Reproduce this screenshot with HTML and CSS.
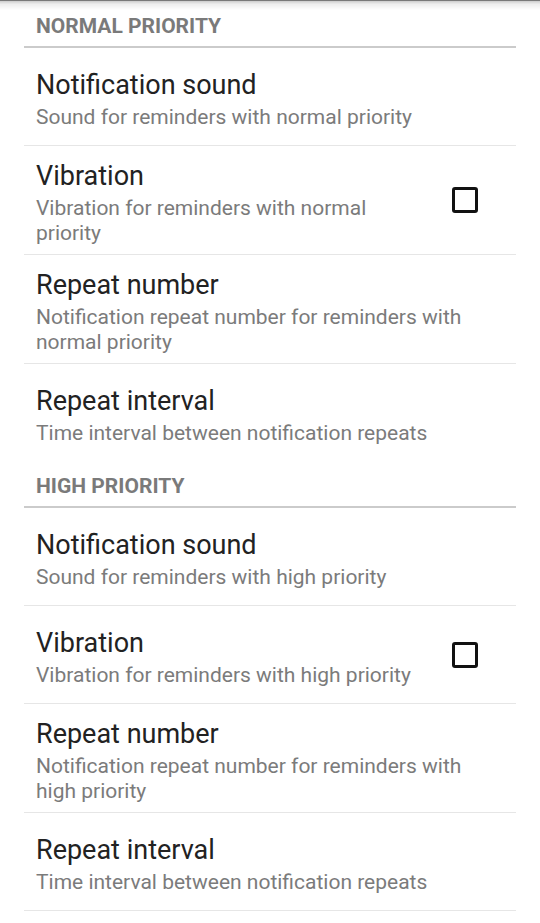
FILE: index.html
```html
<!DOCTYPE html>
<html lang="en">
<head>
<meta charset="utf-8">
<title>Notification settings</title>
<link rel="stylesheet" href="styles.css">
</head>
<body>
<div class="screen">
  <div class="bar-shadow"></div>
  <section class="category">
    <h2 class="cat-title">NORMAL PRIORITY</h2>
    <ul class="prefs">
      <li class="pref">
        <div class="text">
          <div class="title">Notification sound</div>
          <div class="summary">Sound for reminders with normal priority</div>
        </div>
      </li>
      <li class="pref">
        <div class="text">
          <div class="title">Vibration</div>
          <div class="summary">Vibration for reminders with normal priority</div>
        </div>
        <span class="checkbox"></span>
      </li>
      <li class="pref">
        <div class="text">
          <div class="title">Repeat number</div>
          <div class="summary">Notification repeat number for reminders with normal priority</div>
        </div>
      </li>
      <li class="pref">
        <div class="text">
          <div class="title">Repeat interval</div>
          <div class="summary">Time interval between notification repeats</div>
        </div>
      </li>
    </ul>
  </section>
  <section class="category">
    <h2 class="cat-title">HIGH PRIORITY</h2>
    <ul class="prefs">
      <li class="pref">
        <div class="text">
          <div class="title">Notification sound</div>
          <div class="summary">Sound for reminders with high priority</div>
        </div>
      </li>
      <li class="pref">
        <div class="text">
          <div class="title">Vibration</div>
          <div class="summary">Vibration for reminders with high priority</div>
        </div>
        <span class="checkbox"></span>
      </li>
      <li class="pref">
        <div class="text">
          <div class="title">Repeat number</div>
          <div class="summary">Notification repeat number for reminders with high priority</div>
        </div>
      </li>
      <li class="pref">
        <div class="text">
          <div class="title">Repeat interval</div>
          <div class="summary">Time interval between notification repeats</div>
        </div>
      </li>
    </ul>
  </section>
  <div class="list-end"></div>
</div>
</body>
</html>
```
FILE: styles.css
```css
html, body {
  margin: 0;
  padding: 0;
  background: #ffffff;
}

body {
  font-family: Roboto, "Noto Sans", "Liberation Sans", sans-serif;
  -webkit-font-smoothing: antialiased;
}

.screen {
  padding: 1px 24px 0;
}

.bar-shadow {
  position: fixed;
  top: 0;
  left: 0;
  right: 0;
  height: 10px;
  background: linear-gradient(to bottom,
    rgba(0, 0, 0, 0.85) 0,
    rgba(0, 0, 0, 0.2) 1px,
    rgba(0, 0, 0, 0.07) 4px,
    rgba(0, 0, 0, 0) 10px);
  pointer-events: none;
}

.cat-title {
  margin: 0;
  padding: 13px 12px 7px;
  font-size: 21px;
  line-height: 25px;
  font-weight: 700;
  color: #7a7a7a;
  border-bottom: 2px solid #cbcbcb;
}

.prefs {
  list-style: none;
  margin: 0;
  padding: 0;
}

.pref {
  display: flex;
  align-items: center;
  min-height: 97px;
  border-bottom: 1px solid #e6e6e6;
}

.prefs .pref:last-child {
  border-bottom: none;
}

.text {
  flex: 1;
  min-width: 0;
  padding: 14px 12px 9px;
}

.title {
  font-size: 27px;
  line-height: 32px;
  color: #222222;
  white-space: nowrap;
}

.summary {
  margin-top: 4px;
  font-size: 21px;
  line-height: 24.5px;
  color: #7b7b7b;
}

.checkbox {
  flex: none;
  width: 20px;
  height: 20px;
  border: 3px solid #111111;
  border-radius: 3px;
  margin: 0 38px 0 12px;
}

.list-end {
  border-top: 1px solid #e6e6e6;
}
```
